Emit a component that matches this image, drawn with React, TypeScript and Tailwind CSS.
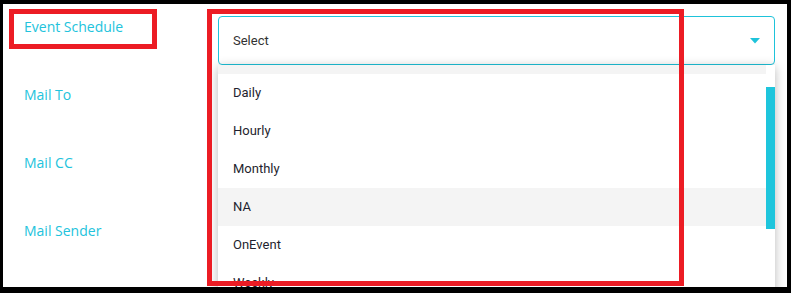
import React from "react";

const labels = ["Event Schedule", "Mail To", "Mail CC", "Mail Sender"];
const options = ["Daily", "Hourly", "Monthly", "NA", "OnEvent", "Weekly"];

const Caret = () => (
  <svg width="10" height="6" viewBox="0 0 10 6" className="shrink-0">
    <path d="M0 0 L10 0 L5 5.5 Z" fill="#1ec3da" />
  </svg>
);

const App = () => {
  const [hovered] = React.useState("NA");

  return (
    <div className="relative w-[791px] h-[293px] bg-black pt-[4px] pl-[3px] pr-[4px] pb-[6px]">
      <div className="relative w-full h-full bg-white overflow-hidden pt-[12px] pl-[21px] pr-[12px]">
        {labels.map((label, i) => (
          <div key={label} className="flex h-[68px] items-start">
            <div
              className="w-[194px] pt-[1px] text-[14px] leading-[20px] text-[#22c3dc]"
              style={{ fontFamily: '"Open Sans", sans-serif' }}
            >
              {label}
            </div>
            {i === 0 && (
              <div className="relative flex-1">
                <div
                  className="flex h-[49px] items-center justify-between rounded-[4px] border border-[#1ec3da] pl-[14px] pr-[14px] text-[13px] text-[#333]"
                  style={{ fontFamily: "Roboto, sans-serif" }}
                >
                  <span>Select</span>
                  <Caret />
                </div>
                {/* open menu */}
                <div
                  className="absolute left-0 right-0 top-[49px] z-10 flex h-[240px] bg-white shadow-[0_2px_10px_rgba(0,0,0,0.28)]"
                  style={{ fontFamily: "Roboto, sans-serif" }}
                >
                  <div className="flex-1">
                    <div className="h-[9px] bg-[#f4f4f4]" />
                    {options.map((opt) => (
                      <div
                        key={opt}
                        className={
                          "flex h-[38px] items-center pl-[15px] text-[13px] text-[#1f1f2e] " +
                          (opt === hovered ? "bg-[#f4f4f4]" : "bg-white")
                        }
                      >
                        {opt}
                      </div>
                    ))}
                  </div>
                  <div className="w-[9px] bg-white pt-[22px]">
                    <div className="h-[142px] bg-[#1ec5dc]" />
                  </div>
                </div>
              </div>
            )}
          </div>
        ))}
      </div>

      {/* red annotation boxes */}
      <div className="absolute left-[9px] top-[9px] h-[40px] w-[148px] border-[5px] border-[#ec1c24] z-20" />
      <div className="absolute left-[207px] top-[9px] h-[277px] w-[477px] border-[5px] border-[#ec1c24] z-20" />
    </div>
  );
};

export default App;
